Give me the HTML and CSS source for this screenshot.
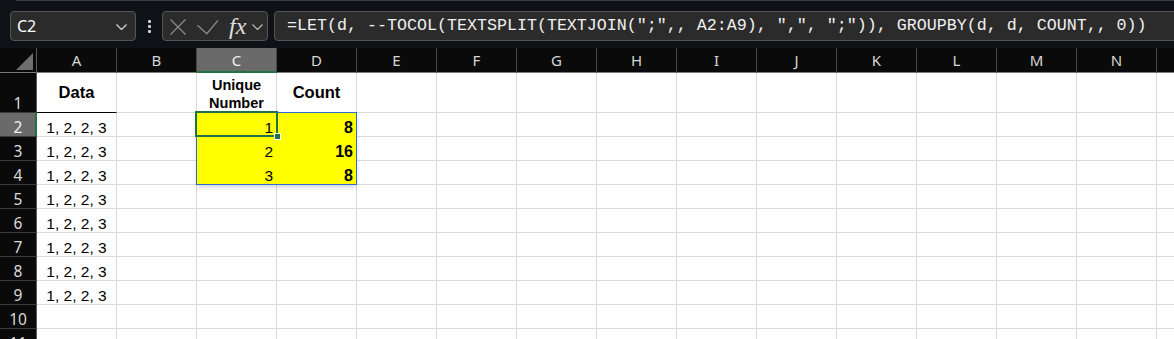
FILE: index.html
```html
<!DOCTYPE html>
<html>
<head>
    <title>Sheet - GROUPBY count</title>
    <meta name="viewport" content="width=device-width, initial-scale=1.0">
    <link rel="stylesheet" href="styles.css">
</head>
<body>
    <div class="topbar">
        <div class="namebox">
            <span class="ref">C2</span>
            <svg class="chev" width="11" height="6" viewBox="0 0 11 6"><polyline points="0.5,0.5 5.5,5.5 10.5,0.5" fill="none" stroke="#d0d0d0" stroke-width="1.3"/></svg>
        </div>
        <div class="dots"><i></i><i></i><i></i></div>
        <div class="fxbox">
            <svg class="ico-x" width="16" height="16" viewBox="0 0 16 16"><path d="M0.5 0.5 L15.5 15.5 M15.5 0.5 L0.5 15.5" stroke="#8a8a8a" stroke-width="1.3" fill="none"/></svg>
            <svg class="ico-ok" width="22" height="15" viewBox="0 0 22 15"><polyline points="0.5,5.3 9.8,13.7 21,0.4" fill="none" stroke="#8a8a8a" stroke-width="1.3"/></svg>
            <span class="fx">fx</span>
            <svg class="chev-sm" width="11" height="6" viewBox="0 0 11 6"><polyline points="0.5,0.5 5.5,5.5 10.5,0.5" fill="none" stroke="#bdbdbd" stroke-width="1.2"/></svg>
        </div>
        <div class="formula">=LET(d, --TOCOL(TEXTSPLIT(TEXTJOIN(";",, A2:A9), ",", ";")), GROUPBY(d, d, COUNT,, 0))</div>
    </div>

    <div class="sheet" id="sheet"></div>

    <script>
        // rejilla de la hoja: cabeceras + celdas (la última columna queda cortada)
        const cols = 'ABCDEFGHIJKLMN'.split('').concat(['']);
        const rows = 11;
        const data = {
            A1: { text: 'Data', cls: 'head underline' },
            C1: { text: 'Unique Number', cls: 'head wrap' },
            D1: { text: 'Count', cls: 'head' },
            C2: { text: '1', cls: 'right fill' },
            D2: { text: '8', cls: 'right fill bold' },
            C3: { text: '2', cls: 'right fill' },
            D3: { text: '16', cls: 'right fill bold' },
            C4: { text: '3', cls: 'right fill' },
            D4: { text: '8', cls: 'right fill bold' }
        };
        for (let r = 2; r <= 9; r++) {
            data['A' + r] = { text: '1, 2, 2, 3', cls: 'center' };
        }

        const sheet = document.getElementById('sheet');

        function el(cls, text) {
            const d = document.createElement('div');
            d.className = cls;
            if (text) d.textContent = text;
            return d;
        }

        const corner = el('corner');
        corner.innerHTML = '<svg width="17" height="17" viewBox="0 0 17 17"><polygon points="17,0 17,17 0,17" fill="#6e6e6e"/></svg>';
        sheet.appendChild(corner);

        cols.forEach(c => {
            sheet.appendChild(el('colhead' + (c === 'C' ? ' sel' : ''), c));
        });

        for (let r = 1; r <= rows; r++) {
            sheet.appendChild(el('rowhead' + (r === 2 ? ' sel' : ''), String(r)));
            cols.forEach(c => {
                const info = c ? data[c + r] : null;
                const cell = el('cell' + (info ? ' ' + info.cls : ''), info ? info.text : '');
                if (c + r === 'C2') {
                    cell.classList.add('anchor');
                    cell.appendChild(el('range'));
                    cell.appendChild(el('active'));
                    cell.appendChild(el('handle'));
                }
                sheet.appendChild(cell);
            });
        }
    </script>
</body>
</html>
```

FILE: styles.css
```css
body {
    margin: 0;
    background: #ffffff;
    width: 1174px;
    height: 339px;
    overflow: hidden;
    font-family: "Liberation Sans", Arial, sans-serif;
}
.topbar {
    height: 48px;
    background: #0e1116;
    display: flex;
    align-items: flex-start;
    padding: 11px 0 0 10px;
    box-sizing: border-box;
    overflow: hidden;
    position: relative;
}
.topbar::before {
    content: "";
    position: absolute;
    top: 0;
    left: 16px;
    right: 0;
    height: 1px;
    background: #3a3d42;
}
.namebox {
    width: 126px;
    height: 30px;
    box-sizing: border-box;
    background: #2b2b2b;
    border: 1px solid #555;
    border-radius: 4px;
    display: flex;
    align-items: center;
    justify-content: space-between;
    padding: 0 8px 0 6px;
}
.ref {
    color: #ffffff;
    font-family: "Noto Sans", sans-serif;
    font-size: 16px;
}
.chev {
    margin-top: 2px;
}
.dots {
    width: 3px;
    margin: 9px 0 0 12px;
    display: flex;
    flex-direction: column;
    gap: 2px;
}
.dots i {
    display: block;
    width: 3px;
    height: 3px;
    background: #d0d0d0;
    border-radius: 1px;
}
.fxbox {
    width: 106px;
    height: 30px;
    margin-left: 11px;
    box-sizing: border-box;
    background: #2b2b2b;
    border: 1px solid #555;
    border-radius: 4px;
    display: flex;
    align-items: center;
    padding-left: 7px;
}
.ico-x {
    margin-top: 2px;
}
.ico-ok {
    margin: 2px 0 0 11px;
}
.fx {
    margin-left: 10px;
    color: #e0e0e0;
    font-family: "Liberation Serif", serif;
    font-style: italic;
    font-size: 24px;
    line-height: 20px;
}
.chev-sm {
    margin: 2px 0 0 6px;
}
.formula {
    flex: 1;
    height: 30px;
    margin: 0 -20px 0 6px;
    box-sizing: border-box;
    background: #2b2b2b;
    border: 1px solid #555;
    border-radius: 4px;
    padding-left: 12px;
    color: #f0f0f0;
    font-family: "Liberation Mono", monospace;
    font-size: 16.67px;
    line-height: 28px;
    white-space: nowrap;
}
.sheet {
    display: grid;
    grid-template-columns: 37px repeat(15, 80px);
    grid-template-rows: 25px 40px repeat(10, 24px);
    width: 1174px;
    height: 291px;
    overflow: hidden;
}
.corner {
    background: #0a0a0a;
    border-right: 1px solid #5a5a5a;
    border-bottom: 1px solid #7a7a7a;
    display: flex;
    align-items: flex-end;
    justify-content: flex-end;
    padding: 0 3px 2px 0;
}
.colhead {
    background: #0a0a0a;
    color: #d6d6d6;
    border-right: 1px solid #474747;
    border-bottom: 1px solid #7a7a7a;
    font-family: "Noto Sans", sans-serif;
    font-size: 15px;
    line-height: 24px;
    text-align: center;
}
.colhead.sel {
    background: #6a6a6a;
    color: #f2f2f2;
    border-bottom-color: #217346;
    box-shadow: inset 0 -1px 0 #217346;
}
.rowhead {
    background: #0a0a0a;
    color: #dadada;
    border-right: 1px solid #5a5a5a;
    border-bottom: 1px solid #3c3c3c;
    font-family: "Noto Sans", sans-serif;
    font-size: 15.5px;
    line-height: 18px;
    display: flex;
    align-items: flex-end;
    justify-content: center;
}
.rowhead.sel {
    background: #6a6a6a;
    color: #f2f2f2;
    border-right-color: #217346;
    box-shadow: inset -1px 0 0 #217346;
}
.cell {
    border-right: 1px solid #dadada;
    border-bottom: 1px solid #dadada;
    display: flex;
    align-items: flex-end;
    padding: 0 3px;
    color: #000;
    font-size: 15.5px;
    line-height: 17px;
    white-space: nowrap;
    overflow: hidden;
}
.center {
    justify-content: center;
}
.right {
    justify-content: flex-end;
}
.bold {
    font-weight: bold;
    font-size: 16px;
}
.fill {
    background: #ffff00;
    border-color: #ffff00;
}
.head {
    align-items: center;
    justify-content: center;
    font-weight: bold;
    font-size: 16.5px;
}
.head.wrap {
    white-space: normal;
    text-align: center;
    font-size: 14.5px;
    line-height: 18px;
    padding-top: 2px;
}
.underline {
    border-bottom-color: #000;
}
.anchor {
    position: relative;
    overflow: visible;
}
.range {
    position: absolute;
    left: -1px;
    top: -1px;
    width: 161px;
    height: 73px;
    box-sizing: border-box;
    border: 1px solid #2f6bd4;
    box-shadow: 0 3px 5px -1px rgba(0,0,0,0.18);
    z-index: 2;
}
.active {
    position: absolute;
    left: -2px;
    top: -2px;
    width: 83px;
    height: 26px;
    box-sizing: border-box;
    border: 2px solid #217346;
    z-index: 3;
}
.handle {
    position: absolute;
    left: 77px;
    top: 20px;
    width: 7px;
    height: 7px;
    box-sizing: border-box;
    background: #217346;
    border: 1px solid #ffffff;
    z-index: 4;
}
```
